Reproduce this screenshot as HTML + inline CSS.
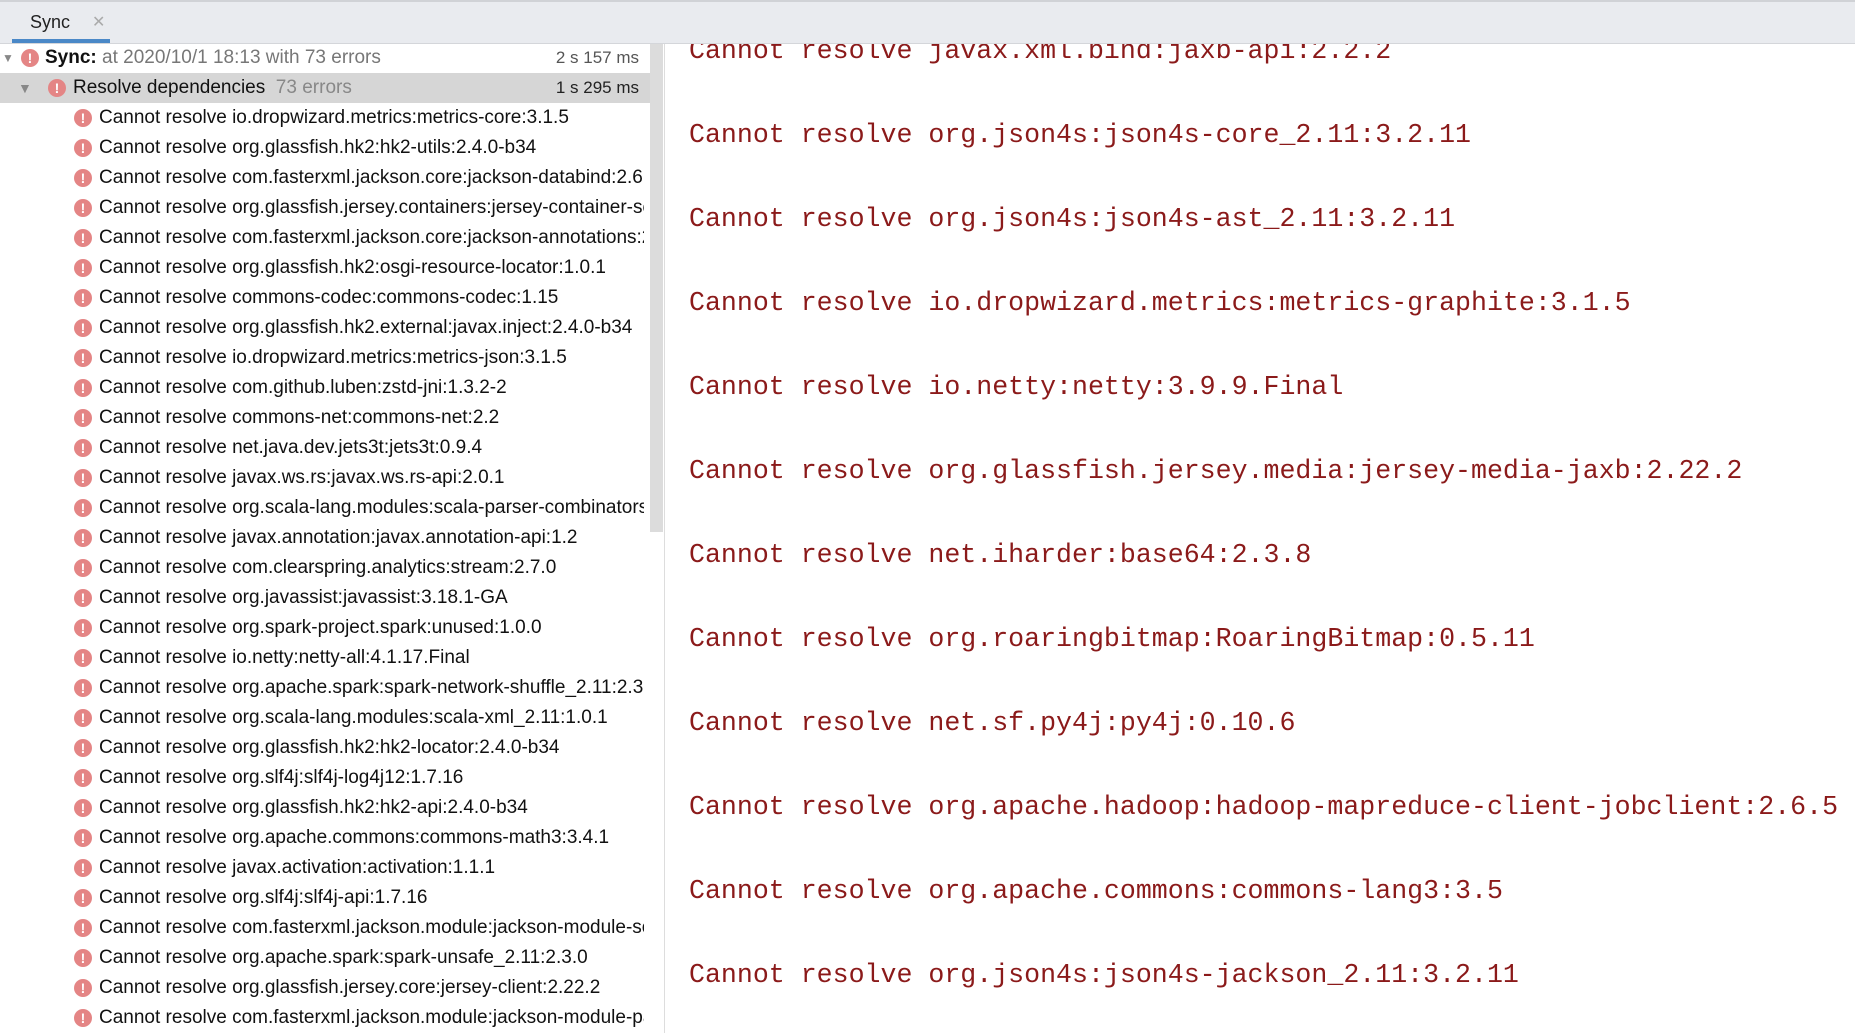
<!DOCTYPE html>
<html><head><meta charset="utf-8"><style>
html,body{margin:0;padding:0;width:1855px;height:1033px;overflow:hidden;background:#fff;font-family:"Liberation Sans","Noto Sans CJK SC",sans-serif}
#hdr{position:absolute;left:0;top:0;width:1855px;height:43px;background:#e9ebef;border-bottom:1px solid #d4d6da;z-index:5}
#hdr .top{position:absolute;left:0;top:0;width:1855px;height:2px;background:#d0d2d6}
#tab{position:absolute;left:12px;top:0;width:98px;height:43px}
#tab span{position:absolute;left:18px;top:12px;font-size:18px;color:#222}
#tab i{position:absolute;left:80px;top:12px;font-style:normal;font-size:16px;color:#aaa}
#tab b{position:absolute;left:0;bottom:0;width:98px;height:4px;background:#4a88c7}
#left{position:absolute;left:0;top:43px;width:664px;height:990px;overflow:hidden;border-right:1px solid #ddd}
.row{position:absolute;left:0;height:30px;width:664px;font-size:19px;line-height:30px;color:#111;white-space:nowrap}
.ic{position:absolute;top:6px;width:18px;height:18px;border-radius:50%;background:#e48585;color:#fff;font-weight:bold;font-size:14px;line-height:18px;text-align:center}
.t{position:absolute}
.tm{position:absolute;right:25px;color:#555;font-size:17px}
.clip{position:absolute;left:99px;top:0;width:545px;overflow:hidden}
#sb{position:absolute;left:650px;top:0;width:13px;height:489px;background:#dcdcdc}
#right{position:absolute;left:665px;top:0;width:1190px;height:1033px}
.c{position:absolute;left:24px;font-family:"Liberation Mono",monospace;font-size:26.6px;color:#8b1a1a;white-space:nowrap;line-height:34px}
</style></head><body>
<div id="hdr"><div class="top"></div><div id="tab"><span>Sync</span><i>✕</i><b></b></div></div>
<div id="left">
<div id="sb"></div>
<div class="row" style="top:0"><span class="t" style="left:2px;color:#888;font-size:12px">▼</span><div class="ic" style="left:21px">!</div><span class="t" style="left:45px"><b>Sync:</b> <span style="color:#777">at 2020/10/1 18:13 with 73 errors</span></span><span class="tm">2 s 157 ms</span></div>
<div class="row" style="top:30px;background:#d6d6d6;width:650px"><span class="t" style="left:18px;color:#888;font-size:14px">▼</span><div class="ic" style="left:48px">!</div><span class="t" style="left:73px">Resolve dependencies <span style="color:#888">&nbsp;73 errors</span></span><span class="tm" style="right:11px;color:#222">1 s 295 ms</span></div>
<div id="rows"></div>
</div>
<div id="right">
<div class="c" style="top:34px">Cannot resolve javax.xml.bind:jaxb-api:2.2.2</div>
<div class="c" style="top:118px">Cannot resolve org.json4s:json4s-core_2.11:3.2.11</div>
<div class="c" style="top:202px">Cannot resolve org.json4s:json4s-ast_2.11:3.2.11</div>
<div class="c" style="top:286px">Cannot resolve io.dropwizard.metrics:metrics-graphite:3.1.5</div>
<div class="c" style="top:370px">Cannot resolve io.netty:netty:3.9.9.Final</div>
<div class="c" style="top:454px">Cannot resolve org.glassfish.jersey.media:jersey-media-jaxb:2.22.2</div>
<div class="c" style="top:538px">Cannot resolve net.iharder:base64:2.3.8</div>
<div class="c" style="top:622px">Cannot resolve org.roaringbitmap:RoaringBitmap:0.5.11</div>
<div class="c" style="top:706px">Cannot resolve net.sf.py4j:py4j:0.10.6</div>
<div class="c" style="top:790px">Cannot resolve org.apache.hadoop:hadoop-mapreduce-client-jobclient:2.6.5</div>
<div class="c" style="top:874px">Cannot resolve org.apache.commons:commons-lang3:3.5</div>
<div class="c" style="top:958px">Cannot resolve org.json4s:json4s-jackson_2.11:3.2.11</div>
</div>
<script>
var L=["io.dropwizard.metrics:metrics-core:3.1.5","org.glassfish.hk2:hk2-utils:2.4.0-b34","com.fasterxml.jackson.core:jackson-databind:2.6.5","org.glassfish.jersey.containers:jersey-container-servlet","com.fasterxml.jackson.core:jackson-annotations:2.6.5","org.glassfish.hk2:osgi-resource-locator:1.0.1","commons-codec:commons-codec:1.15","org.glassfish.hk2.external:javax.inject:2.4.0-b34","io.dropwizard.metrics:metrics-json:3.1.5","com.github.luben:zstd-jni:1.3.2-2","commons-net:commons-net:2.2","net.java.dev.jets3t:jets3t:0.9.4","javax.ws.rs:javax.ws.rs-api:2.0.1","org.scala-lang.modules:scala-parser-combinators","javax.annotation:javax.annotation-api:1.2","com.clearspring.analytics:stream:2.7.0","org.javassist:javassist:3.18.1-GA","org.spark-project.spark:unused:1.0.0","io.netty:netty-all:4.1.17.Final","org.apache.spark:spark-network-shuffle_2.11:2.3.0","org.scala-lang.modules:scala-xml_2.11:1.0.1","org.glassfish.hk2:hk2-locator:2.4.0-b34","org.slf4j:slf4j-log4j12:1.7.16","org.glassfish.hk2:hk2-api:2.4.0-b34","org.apache.commons:commons-math3:3.4.1","javax.activation:activation:1.1.1","org.slf4j:slf4j-api:1.7.16","com.fasterxml.jackson.module:jackson-module-scala","org.apache.spark:spark-unsafe_2.11:2.3.0","org.glassfish.jersey.core:jersey-client:2.22.2","com.fasterxml.jackson.module:jackson-module-paranamer"];
var h="";for(var i=0;i<L.length;i++){h+='<div class="row" style="top:'+(60+i*30)+'px;width:645px"><div class="ic" style="left:74px">!</div><span class="clip">Cannot resolve '+L[i]+'</span></div>';}
document.getElementById("rows").innerHTML=h;
</script>
</body></html>
